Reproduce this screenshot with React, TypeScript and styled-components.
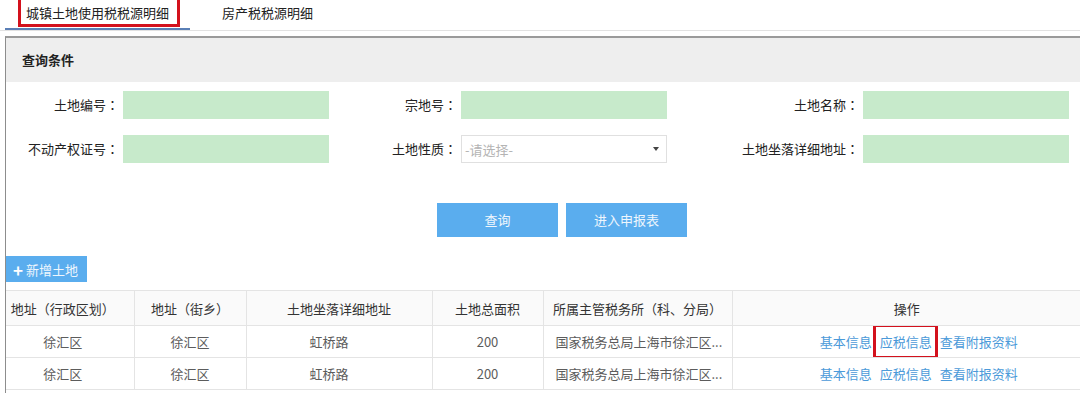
import styled, { createGlobalStyle } from 'styled-components';

const GlobalStyle = createGlobalStyle`
  body {
    margin: 0;
    background: #fff;
    font-family: "Noto Sans CJK SC", "Liberation Sans", sans-serif;
    font-size: 13px;
    color: #333;
  }
`;

const Page = styled.div`
  width: 1080px;
  height: 393px;
  overflow: hidden;
`;

const TabBar = styled.div`
  display: flex;
  height: 30px;
  padding-left: 5px;
  border-bottom: 1px solid #e2e2e2;
`;

const Tab = styled.div<{ $active?: boolean }>`
  width: ${(p) => (p.$active ? '185px' : '155px')};
  height: 30px;
  box-sizing: border-box;
  padding-top: 3px;
  text-align: center;
  line-height: 19px;
  color: #222;
  border-bottom: 2px solid ${(p) => (p.$active ? '#5a7fb6' : 'transparent')};
`;

const Marked = styled.span<{ $inset: string }>`
  position: relative;
  &::after {
    content: '';
    position: absolute;
    inset: ${(p) => p.$inset};
    border: 3px solid #d3111d;
    pointer-events: none;
  }
`;

const Panel = styled.div`
  margin: 5px 0 0 5px;
  border-left: 1px solid #8d8d8d;
  border-top: 2px solid #9a9a9a;
  height: 400px;
`;

const PanelHead = styled.div`
  height: 44px;
  background: #eeeeee;
  padding-left: 16px;
  line-height: 44px;
  font-weight: bold;
  color: #222;
`;

const Form = styled.div`
  display: grid;
  grid-template-columns: 117px 206px 132px 206px 196px 206px;
  row-gap: 16px;
  margin-top: 9px;
`;

const Label = styled.label`
  height: 28px;
  line-height: 28px;
  text-align: right;
  padding-right: 4px;
  color: #222;
  white-space: nowrap;
`;

const Colon = styled.span`
  font-family: "Noto Sans CJK TC", "Noto Sans CJK SC", sans-serif;
`;

const GreenInput = styled.div`
  height: 28px;
  background: #c7eacb;
`;

const Select = styled.div`
  height: 28px;
  box-sizing: border-box;
  border: 1px solid #e0e0e0;
  display: flex;
  align-items: center;
  justify-content: space-between;
  padding: 0 7px 0 3px;
  color: #b4b4b4;
`;

const Caret = styled.span`
  width: 0;
  height: 0;
  border-left: 3px solid transparent;
  border-right: 3px solid transparent;
  border-top: 4px solid #444;
`;

const Actions = styled.div`
  display: flex;
  gap: 8px;
  padding-left: 431px;
  margin-top: 40px;
`;

const Button = styled.div`
  width: 121px;
  height: 34px;
  line-height: 34px;
  text-align: center;
  background: #5aadee;
  color: #eef6fd;
`;

const AddButton = styled.div`
  display: inline-flex;
  align-items: center;
  gap: 3px;
  margin: 19px 0 0 0;
  height: 26px;
  padding: 0 9px 0 7px;
  background: #5aadee;
  color: #eef6fd;
`;

const Plus = styled.span`
  font-size: 17px;
  font-weight: bold;
  color: #fff;
  line-height: 1;
`;

const Table = styled.table`
  margin-top: 8px;
  border-collapse: collapse;
  table-layout: fixed;
  width: 1075px;
`;

const Th = styled.th<{ $w: number; $pr?: number }>`
  box-sizing: border-box;
  width: ${(p) => p.$w}px;
  height: 35px;
  padding: 0 ${(p) => p.$pr ?? 0}px 0 0;
  font-weight: normal;
  color: #333;
  background: #fafafa;
  border: 1px solid #e4e4e4;
  border-left: none;
  text-align: center;
  white-space: nowrap;
`;

const Td = styled.td<{ $align?: string; $pl?: number; $pr?: number }>`
  box-sizing: border-box;
  height: 32px;
  padding: 0 ${(p) => p.$pr ?? 0}px 0 ${(p) => p.$pl ?? 0}px;
  color: #5c5c5c;
  border-right: 1px solid #e4e4e4;
  border-bottom: 1px solid #e4e4e4;
  text-align: ${(p) => p.$align ?? 'center'};
  white-space: nowrap;
  overflow: hidden;
`;

const Links = styled.div`
  display: flex;
  justify-content: center;
  gap: 8px;
`;

const LinkText = styled.a`
  color: #4b9ad9;
  text-decoration: none;
`;

const rows = [
  { area: '徐汇区', street: '徐汇区', addr: '虹桥路', size: '200', office: '国家税务总局上海市徐汇区...' },
  { area: '徐汇区', street: '徐汇区', addr: '虹桥路', size: '200', office: '国家税务总局上海市徐汇区...' },
];

const Field = ({ label }: { label: string }) => (
  <Label>
    {label}
    <Colon>：</Colon>
  </Label>
);

const App = () => {
  return (
    <>
      <GlobalStyle />
      <Page>
        <TabBar>
          <Tab $active>
            <Marked $inset="-6px -11px -5px -8px">城镇土地使用税税源明细</Marked>
          </Tab>
          <Tab>房产税税源明细</Tab>
        </TabBar>
        <Panel>
          <PanelHead>查询条件</PanelHead>
          <Form>
            <Field label="土地编号" />
            <GreenInput />
            <Field label="宗地号" />
            <GreenInput />
            <Field label="土地名称" />
            <GreenInput />
            <Field label="不动产权证号" />
            <GreenInput />
            <Field label="土地性质" />
            <Select>
              -请选择-
              <Caret />
            </Select>
            <Field label="土地坐落详细地址" />
            <GreenInput />
          </Form>
          <Actions>
            <Button>查询</Button>
            <Button>进入申报表</Button>
          </Actions>
          <AddButton>
            <Plus>+</Plus>新增土地
          </AddButton>
          <Table>
            <thead>
              <tr>
                <Th $w={128} $pr={14}>地址（行政区划）</Th>
                <Th $w={112}>地址（街乡）</Th>
                <Th $w={186}>土地坐落详细地址</Th>
                <Th $w={111}>土地总面积</Th>
                <Th $w={189}>所属主管税务所（科、分局）</Th>
                <Th $w={349} style={{ borderRight: 'none' }}>操作</Th>
              </tr>
            </thead>
            <tbody>
              {rows.map((r, i) => (
                <tr key={i}>
                  <Td $pr={14}>{r.area}</Td>
                  <Td>{r.street}</Td>
                  <Td $pr={20}>{r.addr}</Td>
                  <Td>{r.size}</Td>
                  <Td $align="left" $pl={12}>{r.office}</Td>
                  <Td $pl={24} style={{ borderRight: 'none' }}>
                    <Links>
                      <LinkText>基本信息</LinkText>
                      {i === 0 ? (
                        <Marked $inset="-8px -6px -8px -7px">
                          <LinkText>应税信息</LinkText>
                        </Marked>
                      ) : (
                        <LinkText>应税信息</LinkText>
                      )}
                      <LinkText>查看附报资料</LinkText>
                    </Links>
                  </Td>
                </tr>
              ))}
            </tbody>
          </Table>
        </Panel>
      </Page>
    </>
  );
};

export default App;
